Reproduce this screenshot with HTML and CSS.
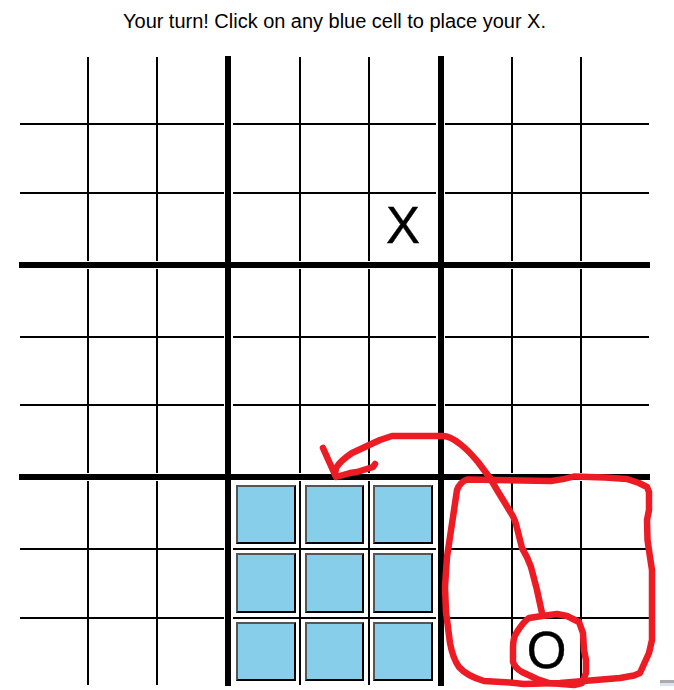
FILE: index.html
```html
<!DOCTYPE html>
<html lang="en">
<head>
<meta charset="utf-8">
<title>Ultimate Tic-Tac-Toe</title>
<link rel="stylesheet" href="styles.css">
</head>
<body>
<p class="status"><span>Your turn! Click on any blue cell to place your X.</span></p>
<main class="game">
  <section class="board b1"><i></i><i></i><i></i><i></i><i></i><i></i><i></i><i></i><i></i></section>
  <section class="board b2"><i></i><i></i><i></i><i></i><i></i><i></i><i></i><i></i><i class="mark">X</i></section>
  <section class="board b3"><i></i><i></i><i></i><i></i><i></i><i></i><i></i><i></i><i></i></section>
  <section class="board b4"><i></i><i></i><i></i><i></i><i></i><i></i><i></i><i></i><i></i></section>
  <section class="board b5"><i></i><i></i><i></i><i></i><i></i><i></i><i></i><i></i><i></i></section>
  <section class="board b6"><i></i><i></i><i></i><i></i><i></i><i></i><i></i><i></i><i></i></section>
  <section class="board b7"><i></i><i></i><i></i><i></i><i></i><i></i><i></i><i></i><i></i></section>
  <section class="board b8"><i><button></button></i><i><button></button></i><i><button></button></i><i><button></button></i><i><button></button></i><i><button></button></i><i><button></button></i><i><button></button></i><i><button></button></i></section>
  <section class="board b9"><i></i><i></i><i></i><i></i><i></i><i></i><i></i><i class="mark">O</i><i></i></section>
</main>
<svg class="ink" width="674" height="690" viewBox="0 0 674 690">
  <path d="M467 479.500L551 481Q562 480 574 476.500L605 477.500L627 479L639 483L647 487L649 492L649 510L647 520L647.500 540L650 557L652 570L652 640L649 653L644 664L640 673L634 675.500L620 678L584 681L560 683L524 684L510 682.500L484 681Q467 676 459 667Q453 659 450 643L446 612L445 587L447 557L453 517L457 490Q460 482 467 479.500Z"/>
  <path d="M335 474L336 468Q340 461 352 453L367 446L380 440L392 436L443 436Q450 436 460 444Q468 450 478 462L490 478L497 490L511 513Q515 519 517 528L522 548Q528 558 531 567L537 590L542 613"/>
  <path d="M323 448L336 477L350 473L357 472L373 467L375 464"/>
  <path d="M542 616L529 618Q524 621 517 632Q513 638 513 647L513 662Q515 668 522 672L537 679L549 683L574 685L582 683L586 673L586 660L584 650L583 633L579 622L567 616L557 614Z"/>
</svg>
<div class="corner"></div>
</body>
</html>
```
FILE: styles.css
```css
body {
  margin: 0;
  width: 674px;
  height: 690px;
  overflow: hidden;
  background: #fff;
  color: #000;
  font-family: "Liberation Sans", Arial, sans-serif;
}
.status {
  margin: 0;
  height: 56px;
  padding: 9px 0 0 123px;
  box-sizing: border-box;
  font-size: 20px;
  line-height: 24px;
  word-spacing: -0.1px;
  white-space: nowrap;
}
.game {
  display: grid;
  width: 631px;
  margin-left: 19px;
  grid-template-columns: 206px 207px 206px;
  grid-template-rows: repeat(3, 206px);
  gap: 6px;
  background: #000;
}
.board {
  display: grid;
  gap: 2px;
  background: #000;
  border: 1px solid #fff;
}
.b1, .b4, .b7 { grid-template-columns: 67px 67px 66px; }
.b2, .b5, .b8 { grid-template-columns: 66px 67px 66px; border-width: 1px 2px; }
.b3, .b6, .b9 { grid-template-columns: 66px 67px 67px; }
.b1, .b2, .b3 { grid-template-rows: 66px 67px 67px; }
.b4, .b5, .b6 { grid-template-rows: 67px 66px 67px; }
.b7, .b8, .b9 { grid-template-rows: 67px 67px 66px; }
.board i {
  display: flex;
  min-width: 0;
  min-height: 0;
  box-sizing: border-box;
  background: #fff;
  font-style: normal;
}
.mark {
  justify-content: center;
  font-size: 51px;
  line-height: 63px;
  -webkit-text-stroke: 0.4px #000;
}
.b8 i { padding: 3px 3px 4px; }
.b8 i:nth-child(-n+3) { padding-top: 4px; }
.b8 i:nth-child(3n+2) { padding-left: 4px; padding-right: 4px; }
button {
  flex: 1;
  margin: 0;
  padding: 0;
  border: 2px solid;
  border-color: #555 #000 #000 #555;
  border-radius: 0;
  background: #87ceeb;
}
.ink {
  position: absolute;
  left: 0;
  top: 0;
  fill: none;
  stroke: #ed1c24;
  stroke-width: 6.5;
  stroke-linejoin: round;
  stroke-linecap: round;
  pointer-events: none;
}
.corner {
  position: absolute;
  right: 0;
  top: 680px;
  width: 14px;
  height: 3px;
  background: #aaa;
  border-bottom: 3px solid #dae3f3;
}
```
